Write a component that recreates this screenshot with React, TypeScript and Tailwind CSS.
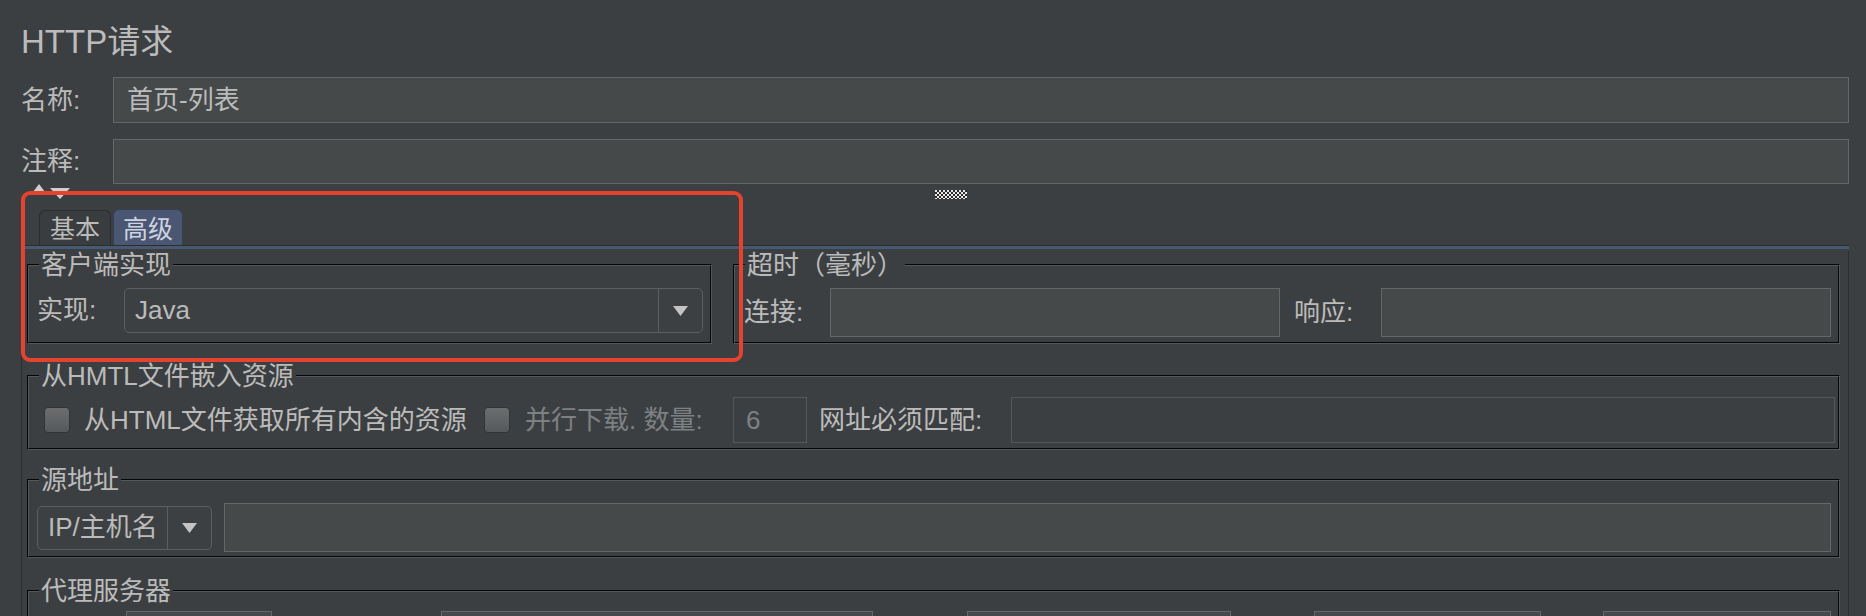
import React from "react";

const Arrow = () => (
  <svg width="15" height="10" viewBox="0 0 15 10">
    <path d="M0 0H15L7.5 10Z" fill="#c4c4c4" />
  </svg>
);

const Field = ({ className = "", children }: { className?: string; children?: React.ReactNode }) => (
  <div className={`flex items-center border border-[#646668] bg-[#45494a] ${className}`}>{children}</div>
);

const DisabledField = ({ className = "", children }: { className?: string; children?: React.ReactNode }) => (
  <div className={`flex items-center border border-[#55585a] bg-[#3c3f41] ${className}`}>{children}</div>
);

const Combo = ({ text, className = "" }: { text: string; className?: string }) => (
  <div className={`flex rounded-[5px] border border-[#5c5f61] bg-[#3d4042] ${className}`}>
    <span className="flex flex-1 items-center pl-[10px] whitespace-nowrap">{text}</span>
    <span className="flex w-[44px] items-center justify-center border-l border-[#5c5f61]">
      <Arrow />
    </span>
  </div>
);

const Checkbox = () => (
  <span className="block h-[26px] w-[26px] shrink-0 rounded-[4px] border border-[#323436] bg-linear-to-b from-[#6b6d6f] to-[#56595b]" />
);

interface GroupProps {
  title: string;
  className?: string;
  children?: React.ReactNode;
}

const Group = ({ title, className = "", children }: GroupProps) => (
  <fieldset className={`border-2 border-[#55585b] [border-style:groove] px-[7px] ${className}`}>
    <legend className="ml-[3px] px-[2px] text-[26px] leading-[28px] whitespace-nowrap">{title}</legend>
    {children}
  </fieldset>
);

export default function App() {
  return (
    <div className="relative h-[616px] w-[1866px] overflow-hidden bg-[#3c3f41] font-['Liberation_Sans','Noto_Sans_CJK_SC',sans-serif] text-[26px] text-[#bbbbbb]">
      <div className="h-[64px] pl-[21px] pt-[20px] text-[33px] leading-[44px]">HTTP请求</div>

      <div className="mt-[13px] flex h-[46px] items-center pl-[21px] pr-[17px]">
        <span className="w-[92px] shrink-0">名称:</span>
        <Field className="h-full flex-1 pl-[13px]">首页-列表</Field>
      </div>

      <div className="mt-[16px] flex h-[45px] items-center pl-[21px] pr-[17px]">
        <span className="w-[92px] shrink-0">注释:</span>
        <Field className="h-full flex-1" />
      </div>

      {/* split pane divider */}
      <div className="flex h-[25px] items-start pl-[33px]">
        <svg width="40" height="16" viewBox="0 0 40 16">
          <path d="M0 8L6 0L12 8Z" fill="#cfcfcf" />
          <path d="M17 4H37L27 15Z" fill="#cfcfcf" />
        </svg>
        <svg className="ml-[862px] mt-[6px]" width="32" height="9" viewBox="0 0 32 9">
          <defs>
            <pattern id="grip" width="4" height="4" patternUnits="userSpaceOnUse">
              <rect width="4" height="4" fill="#2c2e30" />
              <rect width="2" height="2" fill="#e6e6e6" />
              <rect x="2" y="2" width="2" height="2" fill="#e6e6e6" />
            </pattern>
          </defs>
          <rect width="32" height="9" fill="url(#grip)" />
        </svg>
      </div>

      <div className="ml-[21px] w-[1828px]">
        {/* tabs */}
        <div className="flex h-[36px] items-end gap-[2px] pl-[18px]">
          <div className="flex h-[35px] w-[72px] items-center justify-center rounded-t-[6px] border border-b-0 border-[#2b2d2f] bg-[#3a3d3f] pt-[4px] text-[25px]">
            基本
          </div>
          <div className="flex h-[36px] w-[70px] items-center justify-center rounded-t-[6px] border border-b-0 border-[#33405a] bg-[#4a5672] pt-[4px] text-[25px] text-[#cdd3e0]">
            高级
          </div>
        </div>
        <div className="h-[4px] border-t border-[#2b2d2f] bg-[#485a72]" />

        <div className="h-[367px] border-x border-[#2c2e30] pl-[5px] pr-[8px]">
          <div className="mt-[2px] flex gap-[21px]">
            <Group title="客户端实现" className="h-[93px] w-[685px] shrink-0">
              <div className="mt-[9px] flex h-[45px] items-center pl-[1px]">
                <span className="w-[87px] shrink-0">实现:</span>
                <Combo text="Java" className="h-full flex-1" />
              </div>
            </Group>
            <Group title="超时（毫秒）" className="h-[93px] min-w-0 flex-1">
              <div className="mt-[9px] flex h-[49px] items-center pl-[2px]">
                <span className="w-[86px] shrink-0">连接:</span>
                <Field className="h-full flex-1" />
                <span className="ml-[14px] w-[87px] shrink-0">响应:</span>
                <Field className="h-full flex-1" />
              </div>
            </Group>
          </div>

          <Group title="从HMTL文件嵌入资源" className="mt-[18px] h-[88px]">
            <div className="mt-[7px] flex h-[46px] items-center pl-[8px] whitespace-nowrap">
              <Checkbox />
              <span className="ml-[14px] w-[381px] shrink-0">从HTML文件获取所有内含的资源</span>
              <span className="ml-[19px]">
                <Checkbox />
              </span>
              <span className="ml-[15px] w-[181px] shrink-0 text-[#7e8184]">并行下载. 数量:</span>
              <DisabledField className="ml-[27px] h-full w-[74px] shrink-0 pl-[12px] text-[#7e8184]">6</DisabledField>
              <span className="ml-[12px] w-[166px] shrink-0">网址必须匹配:</span>
              <DisabledField className="ml-[26px] -mr-[4px] h-full flex-1" />
            </div>
          </Group>

          <Group title="源地址" className="mt-[16px] h-[92px]">
            <div className="mt-[9px] flex h-[49px] items-center pl-[1px]">
              <Combo text="IP/主机名" className="h-[44px] w-[175px] shrink-0" />
              <Field className="ml-[12px] h-full flex-1" />
            </div>
          </Group>

          <Group title="代理服务器" className="mt-[19px] h-[120px]">
            <div className="mt-[6px] flex h-[46px] items-center pl-[1px]">
              <Field className="ml-[89px] h-full w-[146px] shrink-0" />
              <Field className="ml-[169px] h-full w-[432px] shrink-0" />
              <Field className="ml-[94px] h-full w-[264px] shrink-0" />
              <Field className="ml-[83px] h-full w-[227px] shrink-0" />
              <Field className="ml-[62px] h-full flex-1" />
            </div>
          </Group>
        </div>
      </div>

      {/* annotation highlight */}
      <div className="pointer-events-none absolute left-[21px] top-[191px] h-[171px] w-[722px] rounded-[9px] border-4 border-[#e5432d]" />
    </div>
  );
}
